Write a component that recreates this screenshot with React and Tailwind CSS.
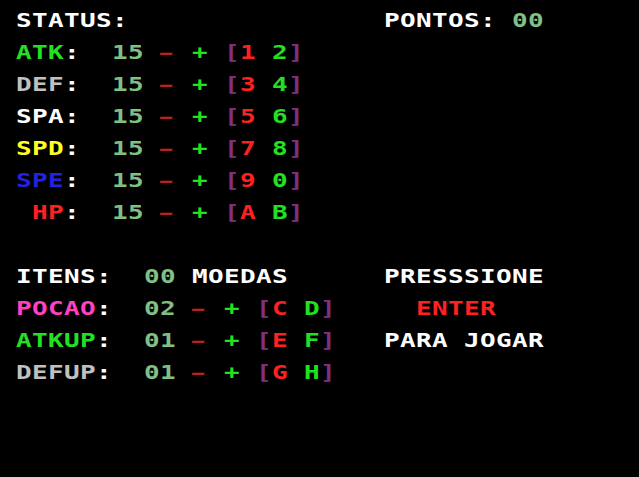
const W = "text-white";
const G = "text-[#22e022]";
const N = "text-[#80c080]";
const M = "text-[#c02020]";
const R = "text-[#ff2020]";
const P = "text-[#803080]";
const GR = "text-[#c0c0c0]";
const Y = "text-[#ffff22]";
const B = "text-[#2222e0]";
const PK = "text-[#ff40c0]";

// each row: list of [column, text, colour]
const stat = (label, color, lcol, a, b) => [
  [lcol, label, color],
  [4, ":", W],
  [7, "15", N],
  [10, "-", M],
  [12, "+", G],
  [14, "[", P],
  [15, a, R],
  [17, b, G],
  [18, "]", P],
];

const item = (label, color, qty, a, b) => [
  [1, label, color],
  [6, ":", W],
  [9, qty, N],
  [12, "-", M],
  [14, "+", G],
  [16, "[", P],
  [17, a, R],
  [19, b, G],
  [20, "]", P],
];

const rows = [
  [[1, "STATUS:", W], [24, "PONTOS:", W], [32, "00", N]],
  stat("ATK", G, 1, "1", "2"),
  stat("DEF", GR, 1, "3", "4"),
  stat("SPA", W, 1, "5", "6"),
  stat("SPD", Y, 1, "7", "8"),
  stat("SPE", B, 1, "9", "0"),
  stat("HP", R, 2, "A", "B"),
  [],
  [[1, "ITENS:", W], [9, "00", N], [12, "MOEDAS", W], [24, "PRESSSIONE", W]],
  [...item("POCAO", PK, "02", "C", "D"), [26, "ENTER", R]],
  [...item("ATKUP", G, "01", "E", "F"), [24, "PARA JOGAR", W]],
  item("DEFUP", GR, "01", "G", "H"),
];

function Row({ segs }) {
  const cells = Array.from({ length: 40 }, () => null);
  segs.forEach(([col, text, color]) => {
    text.split("").forEach((ch, i) => {
      cells[col + i] = { ch, color };
    });
  });
  return (
    <div className="flex h-8">
      {cells.map((c, i) =>
        c && c.ch === "-" ? (
          <span key={i} className={`block w-4 shrink-0 ${c.color}`}>
            {"\u2013"}
          </span>
        ) : (
          <span
            key={i}
            className={`block w-4 shrink-0 origin-left scale-x-[1.3] ${c ? c.color : ""}`}
          >
            {c ? c.ch : "\u00a0"}
          </span>
        )
      )}
    </div>
  );
}

export default function App() {
  return (
    <div
      className="w-[639px] h-[477px] bg-black overflow-hidden pt-[4px] font-bold text-[20px] leading-8"
      style={{ fontFamily: '"DejaVu Sans Mono", monospace' }}
    >
      {rows.map((segs, i) => (
        <Row key={i} segs={segs} />
      ))}
    </div>
  );
}
